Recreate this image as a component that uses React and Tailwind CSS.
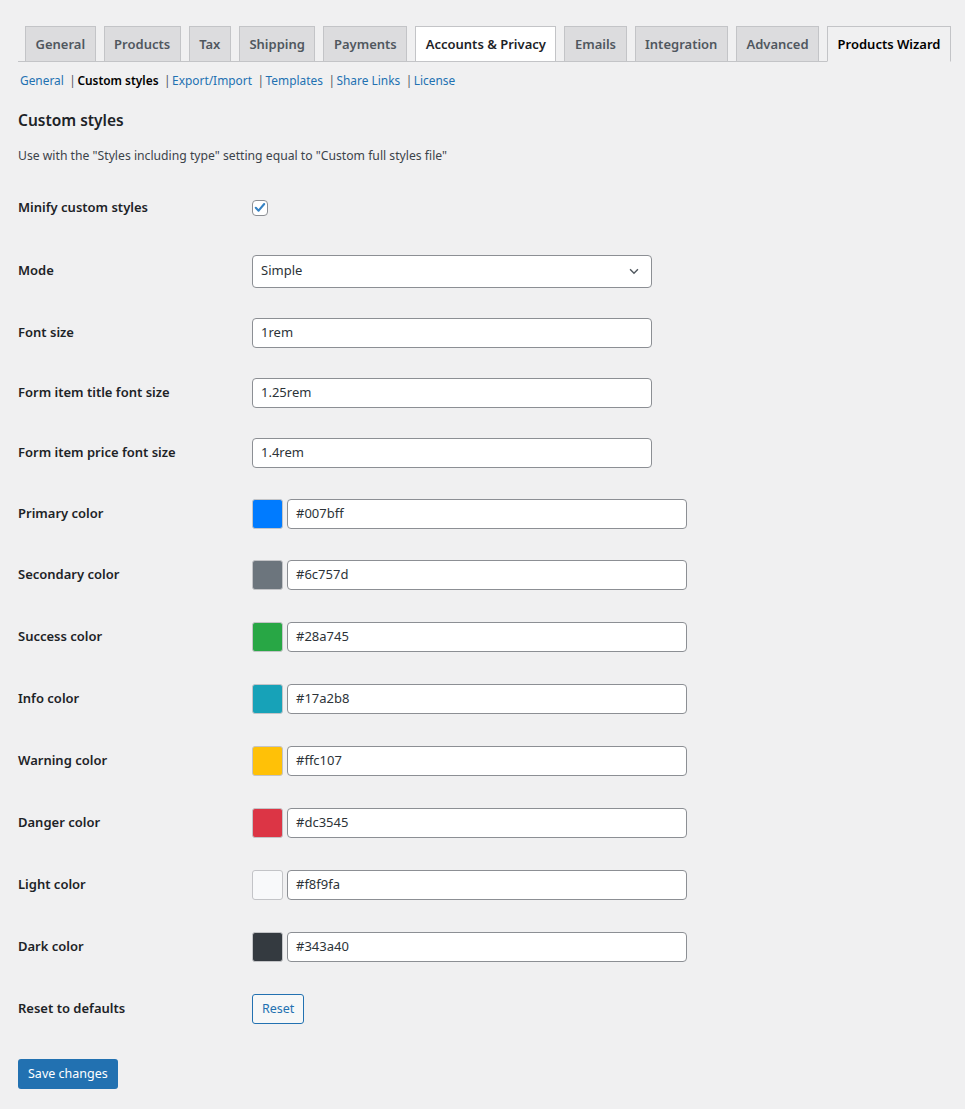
import React from 'react';

const tabs = ['General', 'Products', 'Tax', 'Shipping', 'Payments', 'Accounts & Privacy', 'Emails', 'Integration', 'Advanced', 'Products Wizard'];
const subnav = ['General', 'Custom styles', 'Export/Import', 'Templates', 'Share Links', 'License'];

const colors = [
  ['Primary color', '#007bff', 'h-[61px]'],
  ['Secondary color', '#6c757d', 'h-[62px]'],
  ['Success color', '#28a745', 'h-[62px]'],
  ['Info color', '#17a2b8', 'h-[62px]'],
  ['Warning color', '#ffc107', 'h-[62px]'],
  ['Danger color', '#dc3545', 'h-[62px]'],
  ['Light color', '#f8f9fa', 'h-[62px]'],
  ['Dark color', '#343a40', 'h-[62px]'],
];

function Row({ label, h, children }) {
  return (
    <div className={`flex items-center ${h}`}>
      <div className="w-[234px] shrink-0 text-[13px] font-semibold text-[#1d2327]">{label}</div>
      <div className="flex items-center">{children}</div>
    </div>
  );
}

function TextInput({ value }) {
  return (
    <div className="flex h-[30px] w-[400px] items-center rounded-[4px] border border-[#8c8f94] bg-white px-2 text-[13px] text-[#2c3338]">
      {value}
    </div>
  );
}

export default function App() {
  return (
    <div className="min-h-[1109px] bg-[#f0f0f1] px-[18px] pt-[26px] text-[13px] text-[#3c434a]" style={{ fontFamily: '"Noto Sans", "Open Sans", sans-serif' }}>
      <div className="flex gap-[8px] border-b border-[#c3c4c7] pl-[7px]">
        {tabs.map((t) => {
          const active = t === 'Products Wizard';
          const hover = t === 'Accounts & Privacy';
          return (
            <div
              key={t}
              className={`-mb-px h-[36px] border border-[#c3c4c7] px-[9.5px] py-[5px] text-[13px] leading-[24px] font-semibold whitespace-nowrap ${
                active ? 'border-b-[#f0f0f1] bg-[#f0f0f1] text-black' : hover ? 'bg-white text-[#1d2327]' : 'bg-[#dcdcde] text-[#50575e]'
              }`}
            >
              {t}
            </div>
          );
        })}
      </div>

      <div className="mt-[8px] flex items-center pl-[2px] text-[11.9px] leading-[20px]">
        {subnav.map((s, i) => (
          <span key={s} className="flex items-center">
            {i > 0 && <span className="mr-[1.5px] ml-[5.5px] text-[#50575e]">|</span>}
            <span className={s === 'Custom styles' ? 'font-semibold text-black' : 'text-[#2271b1]'}>{s}</span>
          </span>
        ))}
      </div>

      <h2 className="mt-[18px] text-[15.5px] leading-[24px] font-semibold text-[#1d2327]">Custom styles</h2>
      <p className="mt-[14px] text-[12.2px] leading-[20px] text-[#3c434a]">Use with the "Styles including type" setting equal to "Custom full styles file"</p>

      <div className="mt-[10px]">
        <Row label="Minify custom styles" h="h-[63px]">
          <div className="flex h-[16px] w-[16px] items-center justify-center rounded-[4px] border border-[#8c8f94] bg-white">
            <svg width="15" height="15" viewBox="0 0 20 20">
              <path d="M4 10.5 L8 14.5 L16 5" fill="none" stroke="#3582c4" strokeWidth="3" strokeLinecap="round" strokeLinejoin="round" />
            </svg>
          </div>
        </Row>
        <Row label="Mode" h="h-[64px]">
          <div className="flex h-[33px] w-[400px] items-center justify-between rounded-[4px] border border-[#8c8f94] bg-white pr-[10px] pl-2 text-[13px] text-[#2c3338]">
            <span>Simple</span>
            <svg width="14" height="14" viewBox="0 0 16 16">
              <path d="M3.5 6 L8 10.5 L12.5 6" fill="none" stroke="#50575e" strokeWidth="1.6" />
            </svg>
          </div>
        </Row>
        <Row label="Font size" h="h-[60px]">
          <TextInput value="1rem" />
        </Row>
        <Row label="Form item title font size" h="h-[60px]">
          <TextInput value="1.25rem" />
        </Row>
        <Row label="Form item price font size" h="h-[60px]">
          <TextInput value="1.4rem" />
        </Row>
        {colors.map(([label, hex, h]) => (
          <Row key={label} label={label} h={h}>
            <div className="mr-[4px] h-[30px] w-[31px] rounded-[3px] border border-[#c3c4c7]" style={{ backgroundColor: hex }} />
            <TextInput value={hex} />
          </Row>
        ))}
        <Row label="Reset to defaults" h="h-[62px]">
          <div className="flex h-[30px] items-center rounded-[3px] border border-[#2271b1] bg-[#f6f7f7] px-[9px] text-[12.5px] text-[#2271b1]">Reset</div>
        </Row>
      </div>

      <div className="mt-[19px] inline-flex h-[30px] items-center rounded-[3px] bg-[#2271b1] px-[10px] text-[12.5px] text-white">Save changes</div>
    </div>
  );
}
